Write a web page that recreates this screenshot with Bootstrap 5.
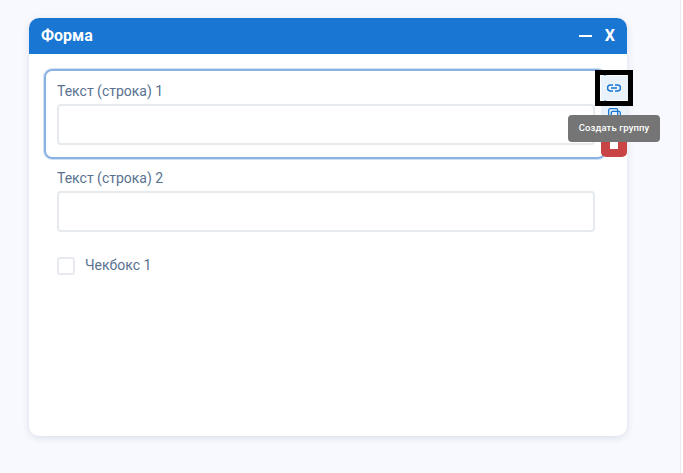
<!DOCTYPE html>
<html lang="ru">
<head>
  <meta charset="UTF-8" />
  <meta name="viewport" content="width=device-width, initial-scale=1.0"/>
  <title>Форма</title>
  <link href="https://cdn.jsdelivr.net/npm/bootstrap@5.3.3/dist/css/bootstrap.min.css" rel="stylesheet">
  <style>
    html { background: #fff; }
    html, body { height: 100%; overflow: hidden; }
    body {
      background: #f8f9fe;
      font-family: Roboto, sans-serif;
      color: #587290;
      border-right: 1px solid #e8eaf0;
      width: 681px;
      padding: 18px 0 0 29px;
    }
    .form-win {
      width: 598px;
      height: 418px;
      border: 0;
      border-radius: 10px;
      box-shadow: 0 2px 7px rgba(60, 80, 120, .15);
    }
    .form-head {
      height: 36px;
      background: #1976d2;
      color: #fff;
      border-radius: 10px 10px 0 0;
      padding: 0 12px;
      font-size: 16px;
      font-weight: 700;
    }
    .head-tools { gap: 13px; font-size: 16px; }
    .head-min { width: 13px; height: 2px; background: #fff; }
    .form-body { padding: 15px 32px 0 15px; }
    .field-group {
      position: relative;
      border: 2px solid #8ab2e3;
      box-shadow: 0 0 0 1px rgba(138, 178, 227, .4);
      border-radius: 8px;
      padding: 5px 11px 12px 11px;
      height: 90px;
      margin-right: -11px;
    }
    .field-plain { padding: 4px 13px 0 13px; }
    .field-label { font-size: 14px; line-height: 20px; margin: 5px 0 3px; display: block; }
    .field-input {
      width: 538px;
      height: 41px;
      border: 2px solid #e6eaee;
      border-radius: 4px;
      background: #fff;
    }
    .check-box {
      width: 18px;
      height: 18px;
      border: 2px solid #e6eaee;
      border-radius: 3px;
      background: #fff;
    }
    .check-row { gap: 10px; padding: 23px 13px 0; font-size: 14px; }
    .side-tools { position: absolute; left: 555px; top: 5px; width: 26px; }
    .side-btn {
      width: 26px;
      background: #e9f1fa;
      color: #1976d2;
    }
    .side-btn.active-btn { height: 24px; margin-bottom: 5px; outline: 5px solid #000; outline-offset: 1px; position: relative; z-index: 2; }
    .side-btn.copy-btn { height: 26px; padding-top: 3px; }
    .side-btn.danger-btn { background: #c94444; border-radius: 0 0 5px 5px; height: 26px; }
    .stop-mark { width: 8px; height: 11px; background: #fff; margin-bottom: 1px; }
    .hint-tip {
      position: absolute;
      left: 522px;
      top: 44px;
      width: 92px;
      height: 27px;
      background: #757575;
      color: #fff;
      font-size: 9.5px;
      font-weight: 500;
      letter-spacing: .1px;
      border-radius: 4px;
      z-index: 3;
    }
  </style>
</head>
<body>

<div class="card form-win">
  <div class="form-head d-flex align-items-center justify-content-between">
    <span>Форма</span>
    <div class="head-tools d-flex align-items-center">
      <span class="head-min"></span>
      <span>X</span>
    </div>
  </div>
  <div class="form-body">
    <div class="field-group">
      <label class="field-label">Текст (строка) 1</label>
      <div class="field-input"></div>
      <div class="side-tools d-flex flex-column">
        <div class="side-btn active-btn d-flex align-items-center justify-content-center">
          <svg width="14" height="8" viewBox="0 0 14 8" fill="none" stroke="currentColor" stroke-width="1.5"><path d="M6 1H3.500a3 3 0 0 0 0 6H6M8 1h2.500a3 3 0 0 1 0 6H8M4 4h6"/></svg>
        </div>
        <div class="side-btn copy-btn d-flex align-items-start justify-content-center">
          <svg width="13" height="14" viewBox="0 0 13 14" fill="none" stroke="currentColor" stroke-width="1.3"><rect x=".7" y=".7" width="9" height="9" rx="1.500"/><rect x="3.300" y="3.300" width="9" height="10" rx="1.500"/></svg>
        </div>
        <div class="side-btn danger-btn d-flex align-items-center justify-content-center">
          <span class="stop-mark"></span>
        </div>
      </div>
      <div class="hint-tip d-flex align-items-center justify-content-center">Создать группу</div>
    </div>
    <div class="field-plain">
      <label class="field-label">Текст (строка) 2</label>
      <div class="field-input"></div>
    </div>
    <div class="check-row d-flex align-items-center">
      <span class="check-box"></span>
      <span>Чекбокс 1</span>
    </div>
  </div>
</div>

<script src="https://cdn.jsdelivr.net/npm/bootstrap@5.3.3/dist/js/bootstrap.bundle.min.js"></script>
</body>
</html>
